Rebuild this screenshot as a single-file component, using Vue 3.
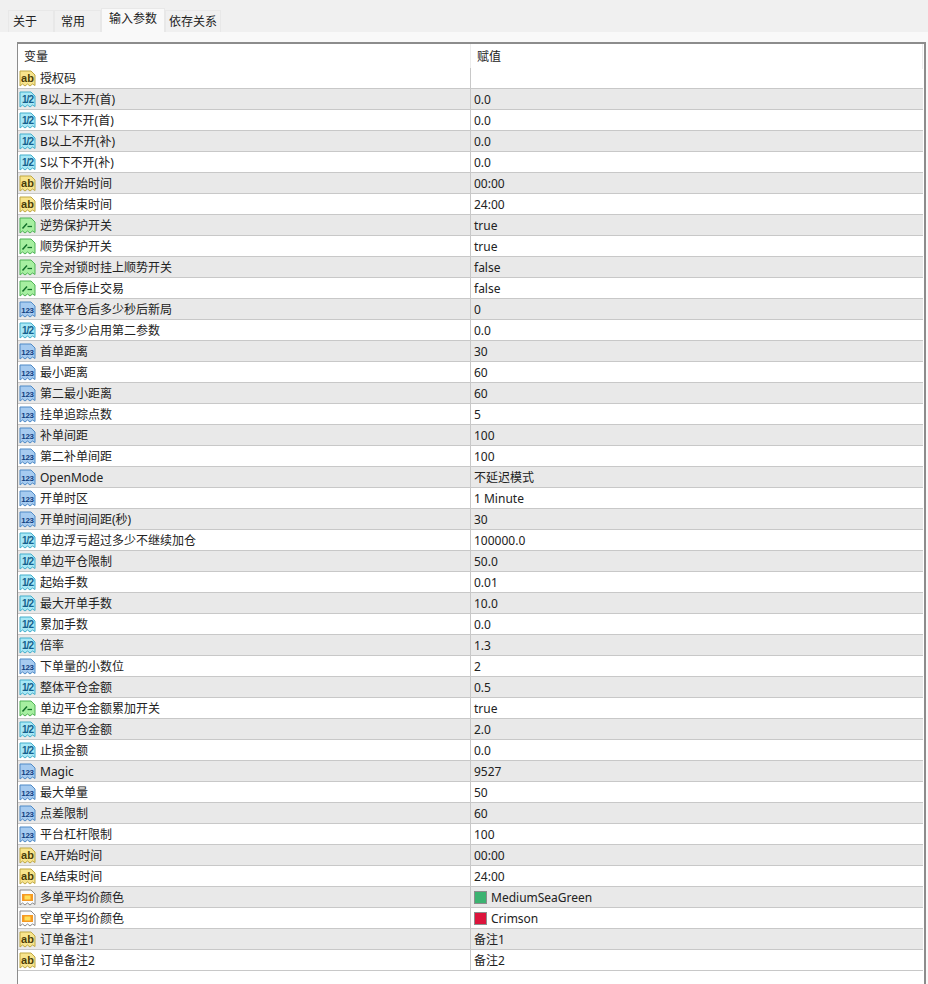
<script setup>
const tabs = [
  { label: '关于', cls: 'tab-about' },
  { label: '常用', cls: 'tab-common' },
  { label: '输入参数', cls: 'tab-input active' },
  { label: '依存关系', cls: 'tab-deps' }
]

const rows = [
  ['ab', '授权码', ''],
  ['v2', 'B以上不开(首)', '0.0'],
  ['v2', 'S以下不开(首)', '0.0'],
  ['v2', 'B以上不开(补)', '0.0'],
  ['v2', 'S以下不开(补)', '0.0'],
  ['ab', '限价开始时间', '00:00'],
  ['ab', '限价结束时间', '24:00'],
  ['bool', '逆势保护开关', 'true'],
  ['bool', '顺势保护开关', 'true'],
  ['bool', '完全对锁时挂上顺势开关', 'false'],
  ['bool', '平仓后停止交易', 'false'],
  ['int', '整体平仓后多少秒后新局', '0'],
  ['v2', '浮亏多少启用第二参数', '0.0'],
  ['int', '首单距离', '30'],
  ['int', '最小距离', '60'],
  ['int', '第二最小距离', '60'],
  ['int', '挂单追踪点数', '5'],
  ['int', '补单间距', '100'],
  ['int', '第二补单间距', '100'],
  ['int', 'OpenMode', '不延迟模式'],
  ['int', '开单时区', '1 Minute'],
  ['int', '开单时间间距(秒)', '30'],
  ['v2', '单边浮亏超过多少不继续加仓', '100000.0'],
  ['v2', '单边平仓限制', '50.0'],
  ['v2', '起始手数', '0.01'],
  ['v2', '最大开单手数', '10.0'],
  ['v2', '累加手数', '0.0'],
  ['v2', '倍率', '1.3'],
  ['int', '下单量的小数位', '2'],
  ['v2', '整体平仓金额', '0.5'],
  ['bool', '单边平仓金额累加开关', 'true'],
  ['v2', '单边平仓金额', '2.0'],
  ['v2', '止损金额', '0.0'],
  ['int', 'Magic', '9527'],
  ['int', '最大单量', '50'],
  ['int', '点差限制', '60'],
  ['int', '平台杠杆限制', '100'],
  ['ab', 'EA开始时间', '00:00'],
  ['ab', 'EA结束时间', '24:00'],
  ['color', '多单平均价颜色', 'MediumSeaGreen', '#3cb371'],
  ['color', '空单平均价颜色', 'Crimson', '#dc143c'],
  ['ab', '订单备注1', '备注1'],
  ['ab', '订单备注2', '备注2']
].map(([type, name, value, swatch]) => ({ type, name, value, swatch }))

const sheet = 'M1 1H12L16 5V15.5L13.5 14L11 16L8.5 14L6 16L3.5 14L1 16Z'

const palette = {
  ab: { fill: '#f8e48c', line: '#bfa845', ink: '#4a3c08', text: 'ab', size: 11, spacing: 0 },
  v2: { fill: '#a8e8f6', line: '#45aecb', ink: '#14608c', text: '1/2', size: 10, spacing: -1 },
  int: { fill: '#a6cbf0', line: '#4f8ac6', ink: '#123f80', text: '123', size: 8, spacing: -0.3 }
}
</script>

<template>
  <div class="window">
    <div class="tabs">
      <div v-for="tab in tabs" :key="tab.label" class="tab" :class="tab.cls">{{ tab.label }}</div>
    </div>
    <div class="pane">
      <div class="table">
        <div class="head">
          <div class="head-cell">变量</div>
          <div class="head-cell second">赋值</div>
        </div>
        <div v-for="row in rows" :key="row.name" class="row">
          <div class="name">
            <svg class="icon" width="17" height="17" viewBox="0 0 17 17">
              <template v-if="palette[row.type]">
                <path :d="sheet" :fill="palette[row.type].fill" :stroke="palette[row.type].line" />
                <text
                  x="8.5"
                  y="11.5"
                  text-anchor="middle"
                  class="icon-text"
                  :font-size="palette[row.type].size"
                  :letter-spacing="palette[row.type].spacing"
                  :fill="palette[row.type].ink"
                >{{ palette[row.type].text }}</text>
              </template>
              <template v-else-if="row.type === 'bool'">
                <path :d="sheet" fill="#a6efa0" stroke="#4fb257" />
                <path d="M3.5 11.5L8 6.5" fill="none" stroke="#12702a" stroke-width="1.5" />
                <path d="M8.5 9.5H13" fill="none" stroke="#12702a" stroke-width="1.3" />
              </template>
              <template v-else>
                <path :d="sheet" fill="#fbfbfb" stroke="#8a8a8a" />
                <rect x="3" y="5" width="11" height="7" fill="#f59a23" />
                <rect x="5.5" y="6.5" width="6" height="4" fill="#ffdf5a" />
              </template>
            </svg>
            <span>{{ row.name }}</span>
          </div>
          <div class="value">
            <span v-if="row.swatch" class="swatch" :style="{ background: row.swatch }"></span>
            <span>{{ row.value }}</span>
          </div>
        </div>
      </div>
    </div>
  </div>
</template>

<style>
html, body { margin: 0; background: #f0f0f0; }
</style>

<style scoped>
.window {
  width: 928px;
  height: 984px;
  overflow: hidden;
  background: #f0f0f0;
  font-family: "Noto Sans", "Noto Sans CJK SC", sans-serif;
  font-size: 12px;
  color: #222;
}
.tabs {
  display: flex;
  height: 32px;
  padding-left: 8px;
  box-sizing: border-box;
  align-items: flex-end;
}
.tab {
  height: 22px;
  line-height: 22px;
  box-sizing: border-box;
  background: #f0f0f0;
  border: 1px solid #e8e8e8;
  border-bottom: none;
}
.tab-about { width: 46px; padding-left: 4px; }
.tab-common { width: 47px; padding-left: 6px; }
.tab-input {
  width: 64px;
  height: 24px;
  line-height: 20px;
  padding-left: 7px;
}
.tab-deps { width: 56px; padding-left: 3px; }
.tab.active { background: #f9f9f9; }
.pane {
  height: 952px;
  padding: 10px 2px 0 17px;
  box-sizing: border-box;
  background: #f9f9f9;
}
.table {
  height: 100%;
  padding-right: 1px;
  background: #fff;
  border-top: 2px solid #8c8c8c;
  border-left: 1px solid #8c8c8c;
  border-right: 2px solid #8c8c8c;
}
.head {
  display: grid;
  grid-template-columns: 452px 1fr;
  height: 23px;
  line-height: 25px;
}
.head-cell { padding-left: 6px; }
.head-cell.second {
  padding-left: 6px;
  border-left: 1px solid #ececec;
  border-right: 1px solid #ececec;
}
.row {
  display: grid;
  grid-template-columns: 452px 1fr;
  height: 21px;
  box-sizing: border-box;
  border-top: 1px solid #c8c8c8;
  background: #fff;
}
.row:nth-of-type(2) { border-top-color: #fff; }
.row:nth-of-type(odd) { background: #e9e9e9; }
.row:last-child { border-bottom: 1px solid #c8c8c8; height: 22px; }
.name, .value {
  display: flex;
  align-items: center;
  min-width: 0;
}
.name { padding-left: 1px; gap: 4px; }
.value {
  padding-left: 3px;
  border-left: 1px solid #c8c8c8;
}
.icon { flex: none; }
.icon-text {
  font-family: "Liberation Sans", sans-serif;
  font-weight: 700;
}
.swatch {
  width: 13px;
  height: 13px;
  margin-right: 4px;
  border: 1px solid #8d8d8d;
  box-sizing: border-box;
}
</style>
